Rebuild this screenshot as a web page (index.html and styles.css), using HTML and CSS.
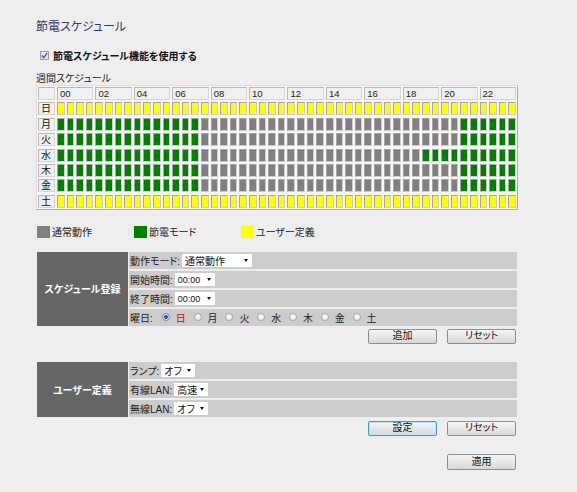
FILE: index.html
```html
<!DOCTYPE html>
<html lang="ja">
<head>
<meta charset="utf-8">
<title>節電スケジュール</title>
<link rel="stylesheet" href="styles.css">
</head>
<body>
<div class="page">
  <h1 class="title">節電スケジュール</h1>

  <div class="enable">
    <span class="chk"><svg width="7" height="7" viewBox="0 0 7 7"><path d="M0.8 3.6 L2.7 5.6 L6.2 1" fill="none" stroke="#4b5f93" stroke-width="1.4"/></svg></span>
    <span class="enable-text">節電スケジュール機能を使用する</span>
  </div>

  <div class="week-label">週間スケジュール</div>

  <div class="sched">
    <span class="corner"></span>
    <span class="hd">00</span><span class="hd">02</span><span class="hd">04</span><span class="hd">06</span>
    <span class="hd">08</span><span class="hd">10</span><span class="hd">12</span><span class="hd">14</span>
    <span class="hd">16</span><span class="hd">18</span><span class="hd">20</span><span class="hd">22</span>

    <span class="day">日</span>
    <i class="y"></i><i class="y"></i><i class="y"></i><i class="y"></i><i class="y"></i><i class="y"></i><i class="y"></i><i class="y"></i><i class="y"></i><i class="y"></i><i class="y"></i><i class="y"></i>
    <i class="y"></i><i class="y"></i><i class="y"></i><i class="y"></i><i class="y"></i><i class="y"></i><i class="y"></i><i class="y"></i><i class="y"></i><i class="y"></i><i class="y"></i><i class="y"></i>
    <i class="y"></i><i class="y"></i><i class="y"></i><i class="y"></i><i class="y"></i><i class="y"></i><i class="y"></i><i class="y"></i><i class="y"></i><i class="y"></i><i class="y"></i><i class="y"></i>
    <i class="y"></i><i class="y"></i><i class="y"></i><i class="y"></i><i class="y"></i><i class="y"></i><i class="y"></i><i class="y"></i><i class="y"></i><i class="y"></i><i class="y"></i><i class="y"></i>

    <span class="day">月</span>
    <i class="g"></i><i class="g"></i><i class="g"></i><i class="g"></i><i class="g"></i><i class="g"></i><i class="g"></i><i class="g"></i><i class="g"></i><i class="g"></i><i class="g"></i><i class="g"></i>
    <i class="g"></i><i class="g"></i><i class="g"></i><i class="n"></i><i class="n"></i><i class="n"></i><i class="n"></i><i class="n"></i><i class="n"></i><i class="n"></i><i class="n"></i><i class="n"></i>
    <i class="n"></i><i class="n"></i><i class="n"></i><i class="n"></i><i class="n"></i><i class="n"></i><i class="n"></i><i class="n"></i><i class="n"></i><i class="n"></i><i class="n"></i><i class="n"></i>
    <i class="n"></i><i class="n"></i><i class="n"></i><i class="n"></i><i class="n"></i><i class="n"></i><i class="g"></i><i class="g"></i><i class="g"></i><i class="g"></i><i class="g"></i><i class="g"></i>

    <span class="day">火</span>
    <i class="g"></i><i class="g"></i><i class="g"></i><i class="g"></i><i class="g"></i><i class="g"></i><i class="g"></i><i class="g"></i><i class="g"></i><i class="g"></i><i class="g"></i><i class="g"></i>
    <i class="g"></i><i class="g"></i><i class="g"></i><i class="n"></i><i class="n"></i><i class="n"></i><i class="n"></i><i class="n"></i><i class="n"></i><i class="n"></i><i class="n"></i><i class="n"></i>
    <i class="n"></i><i class="n"></i><i class="n"></i><i class="n"></i><i class="n"></i><i class="n"></i><i class="n"></i><i class="n"></i><i class="n"></i><i class="n"></i><i class="n"></i><i class="n"></i>
    <i class="n"></i><i class="n"></i><i class="n"></i><i class="n"></i><i class="n"></i><i class="n"></i><i class="g"></i><i class="g"></i><i class="g"></i><i class="g"></i><i class="g"></i><i class="g"></i>

    <span class="day">水</span>
    <i class="g"></i><i class="g"></i><i class="g"></i><i class="g"></i><i class="g"></i><i class="g"></i><i class="g"></i><i class="g"></i><i class="g"></i><i class="g"></i><i class="g"></i><i class="g"></i>
    <i class="g"></i><i class="g"></i><i class="g"></i><i class="n"></i><i class="n"></i><i class="n"></i><i class="n"></i><i class="n"></i><i class="n"></i><i class="n"></i><i class="n"></i><i class="n"></i>
    <i class="n"></i><i class="n"></i><i class="n"></i><i class="n"></i><i class="n"></i><i class="n"></i><i class="n"></i><i class="n"></i><i class="n"></i><i class="n"></i><i class="n"></i><i class="n"></i>
    <i class="n"></i><i class="n"></i><i class="g"></i><i class="g"></i><i class="g"></i><i class="g"></i><i class="g"></i><i class="g"></i><i class="g"></i><i class="g"></i><i class="g"></i><i class="g"></i>

    <span class="day">木</span>
    <i class="g"></i><i class="g"></i><i class="g"></i><i class="g"></i><i class="g"></i><i class="g"></i><i class="g"></i><i class="g"></i><i class="g"></i><i class="g"></i><i class="g"></i><i class="g"></i>
    <i class="g"></i><i class="g"></i><i class="g"></i><i class="n"></i><i class="n"></i><i class="n"></i><i class="n"></i><i class="n"></i><i class="n"></i><i class="n"></i><i class="n"></i><i class="n"></i>
    <i class="n"></i><i class="n"></i><i class="n"></i><i class="n"></i><i class="n"></i><i class="n"></i><i class="n"></i><i class="n"></i><i class="n"></i><i class="n"></i><i class="n"></i><i class="n"></i>
    <i class="n"></i><i class="n"></i><i class="n"></i><i class="n"></i><i class="n"></i><i class="n"></i><i class="g"></i><i class="g"></i><i class="g"></i><i class="g"></i><i class="g"></i><i class="g"></i>

    <span class="day">金</span>
    <i class="g"></i><i class="g"></i><i class="g"></i><i class="g"></i><i class="g"></i><i class="g"></i><i class="g"></i><i class="g"></i><i class="g"></i><i class="g"></i><i class="g"></i><i class="g"></i>
    <i class="g"></i><i class="g"></i><i class="g"></i><i class="n"></i><i class="n"></i><i class="n"></i><i class="n"></i><i class="n"></i><i class="n"></i><i class="n"></i><i class="n"></i><i class="n"></i>
    <i class="n"></i><i class="n"></i><i class="n"></i><i class="n"></i><i class="n"></i><i class="n"></i><i class="n"></i><i class="n"></i><i class="n"></i><i class="n"></i><i class="n"></i><i class="n"></i>
    <i class="n"></i><i class="n"></i><i class="n"></i><i class="n"></i><i class="n"></i><i class="n"></i><i class="g"></i><i class="g"></i><i class="g"></i><i class="g"></i><i class="g"></i><i class="g"></i>

    <span class="day">土</span>
    <i class="y"></i><i class="y"></i><i class="y"></i><i class="y"></i><i class="y"></i><i class="y"></i><i class="y"></i><i class="y"></i><i class="y"></i><i class="y"></i><i class="y"></i><i class="y"></i>
    <i class="y"></i><i class="y"></i><i class="y"></i><i class="y"></i><i class="y"></i><i class="y"></i><i class="y"></i><i class="y"></i><i class="y"></i><i class="y"></i><i class="y"></i><i class="y"></i>
    <i class="y"></i><i class="y"></i><i class="y"></i><i class="y"></i><i class="y"></i><i class="y"></i><i class="y"></i><i class="y"></i><i class="y"></i><i class="y"></i><i class="y"></i><i class="y"></i>
    <i class="y"></i><i class="y"></i><i class="y"></i><i class="y"></i><i class="y"></i><i class="y"></i><i class="y"></i><i class="y"></i><i class="y"></i><i class="y"></i><i class="y"></i><i class="y"></i>
  </div>

  <div class="legend">
    <div class="leg leg-1"><span class="sw sw-n"></span>通常動作</div>
    <div class="leg leg-2"><span class="sw sw-g"></span>節電モード</div>
    <div class="leg"><span class="sw sw-y"></span>ユーザー定義</div>
  </div>

  <div class="block block-1">
    <div class="panel">スケジュール登録</div>
    <div class="rows">
      <div class="row"><span class="lbl">動作モード:</span><span class="sel sel-mode">通常動作<span class="arr"></span></span></div>
      <div class="row"><span class="lbl">開始時間:</span><span class="sel sel-time">00:00<span class="arr"></span></span></div>
      <div class="row"><span class="lbl">終了時間:</span><span class="sel sel-time">00:00<span class="arr"></span></span></div>
      <div class="row"><span class="lbl lbl-days">曜日:</span>
        <span class="days">
          <span class="opt"><span class="radio on"></span><span class="sun">日</span></span>
          <span class="opt"><span class="radio"></span>月</span>
          <span class="opt"><span class="radio"></span>火</span>
          <span class="opt"><span class="radio"></span>水</span>
          <span class="opt"><span class="radio"></span>木</span>
          <span class="opt"><span class="radio"></span>金</span>
          <span class="opt"><span class="radio"></span>土</span>
        </span>
      </div>
    </div>
  </div>
  <div class="btns btns-1"><button class="btn">追加</button><button class="btn">リセット</button></div>

  <div class="block block-2">
    <div class="panel">ユーザー定義</div>
    <div class="rows">
      <div class="row"><span class="lbl">ランプ:</span><span class="sel sel-lamp">オフ<span class="arr"></span></span></div>
      <div class="row"><span class="lbl">有線LAN:</span><span class="sel sel-lan">高速<span class="arr"></span></span></div>
      <div class="row"><span class="lbl">無線LAN:</span><span class="sel sel-lan">オフ<span class="arr"></span></span></div>
    </div>
  </div>
  <div class="btns btns-2"><button class="btn btn-focus">設定</button><button class="btn">リセット</button></div>

  <div class="btns btns-3"><button class="btn btn-apply">適用</button></div>
</div>
</body>
</html>
```

FILE: styles.css
```css
html, body {
  margin: 0;
  padding: 0;
  background: #eeeeee;
}

body {
  font-family: "Liberation Sans", "Noto Sans CJK JP", sans-serif;
  font-feature-settings: "palt" 1;
  color: #222222;
  font-size: 10px;
}

.page {
  width: 482px;
  padding: 18px 0 0 36px;
}

.title {
  margin: 0;
  font-size: 12px;
  line-height: 18px;
  font-weight: normal;
  color: #363668;
}

.enable {
  display: flex;
  align-items: center;
  height: 14px;
  margin-top: 12px;
  padding-left: 4px;
}

.chk {
  width: 9px;
  height: 9px;
  box-sizing: border-box;
  border: 1px solid #a0a0a0;
  background: linear-gradient(#f0f0f0, #e2e2e2);
  display: flex;
  align-items: center;
  justify-content: center;
  margin-right: 4px;
}

.chk svg { display: block; }

.enable-text {
  font-size: 10px;
  font-weight: bold;
  color: #111111;
}

.week-label {
  margin-top: 11px;
  height: 12px;
  line-height: 12px;
  font-size: 10px;
  color: #222222;
}

/* schedule grid */
.sched {
  box-sizing: border-box;
  width: 482px;
  display: grid;
  grid-template-columns: 17px repeat(48, 1fr);
  grid-template-rows: 13px repeat(7, 13px);
  column-gap: 2px;
  row-gap: 2.4px;
  padding: 1px;
  border: 1px solid;
  border-color: #dedede #acacac #acacac #dedede;
  background: #f7f7f7;
}

.sched .corner,
.sched .hd,
.sched .day {
  box-sizing: border-box;
  border: 1px solid;
  border-color: #b8b8b8 #d6d6d6 #d6d6d6 #b8b8b8;
  background: #f0f0f0;
}

.sched .hd {
  grid-column: span 4;
  font-size: 9.5px;
  line-height: 11px;
  padding-left: 2px;
  color: #222222;
}

.sched .day {
  font-size: 10px;
  line-height: 11px;
  padding-left: 2px;
  color: #111111;
}

.sched i {
  display: block;
  box-sizing: border-box;
  border: 1px solid;
  border-color: #a4a4a4 #cfcfcf #cfcfcf #a4a4a4;
}

.sched i.y { background: #ffff00; }
.sched i.g { background: #008000; }
.sched i.n { background: #808080; }

/* legend */
.legend {
  display: flex;
  margin-top: 16px;
  padding-left: 1px;
  height: 12px;
}

.leg {
  display: flex;
  align-items: center;
  font-size: 10px;
  color: #222222;
}

.leg-1 { width: 97px; }
.leg-2 { width: 107px; }

.sw {
  width: 13px;
  height: 12px;
  margin-right: 2px;
}

.sw-n { background: #808080; }
.sw-g { background: #008000; }
.sw-y { background: #ffff00; }

/* form blocks */
.block {
  display: flex;
  gap: 1px;
  margin-left: 1px;
  width: 480px;
}

.block-1 { margin-top: 14px; }
.block-2 { margin-top: 18px; }

.panel {
  width: 91px;
  background: #666666;
  color: #ffffff;
  font-weight: bold;
  font-size: 10px;
  display: flex;
  align-items: center;
  justify-content: center;
}

.rows {
  flex: 1;
  display: flex;
  flex-direction: column;
  gap: 2px;
}

.row {
  height: 17px;
  background: #cccccc;
  display: flex;
  align-items: center;
  padding-left: 1px;
  font-size: 10px;
  color: #222222;
}

.lbl { margin-right: 2px; }
.lbl-days { margin-right: 9px; }

.sel {
  box-sizing: border-box;
  height: 13px;
  background: #ffffff;
  display: flex;
  align-items: center;
  justify-content: space-between;
  padding: 0 4px 0 3px;
  font-size: 10px;
  color: #111111;
  margin-top: 1px;
}

.sel-mode { width: 70px; }
.sel-time { width: 40px; font-size: 9px; }
.sel-lamp { width: 34px; }
.sel-lan { width: 34px; }

.arr {
  width: 0;
  height: 0;
  border-left: 2.5px solid transparent;
  border-right: 2.5px solid transparent;
  border-top: 3px solid #111111;
}

.days {
  display: flex;
  align-items: center;
}

.opt {
  display: flex;
  align-items: center;
  width: 31.8px;
}

.radio {
  box-sizing: border-box;
  width: 8px;
  height: 8px;
  border-radius: 50%;
  border: 1px solid #a8a8a8;
  background: radial-gradient(circle at 50% 40%, #ffffff, #dedede);
  margin-right: 6px;
}

.radio.on {
  background: radial-gradient(circle, #2a5fa8 0, #2a5fa8 1.6px, #cfe0f2 2.2px, #eeeeee 4px);
  border-color: #7c8fa8;
}

.sun { color: #e00000; }

/* buttons */
.btns {
  display: flex;
  justify-content: flex-end;
  gap: 10px;
  width: 480px;
}

.btns-1 { margin-top: 3px; }
.btns-2 { margin-top: 4px; }
.btns-3 { margin-top: 18px; }

.btn {
  box-sizing: border-box;
  width: 69px;
  height: 15px;
  padding: 0;
  border: 1px solid #8e8e8e;
  border-radius: 2px;
  background: linear-gradient(#f6f6f6, #e6e6e6 50%, #d8d8d8);
  font-family: "Liberation Sans", "Noto Sans CJK JP", sans-serif;
  font-feature-settings: "palt" 1;
  font-size: 10px;
  line-height: 12px;
  color: #111111;
}

.btn-focus {
  border-color: #3c9ad8;
  box-shadow: inset 0 0 0 1px #bfe2f8;
}

.btn-apply { height: 16px; }
```
